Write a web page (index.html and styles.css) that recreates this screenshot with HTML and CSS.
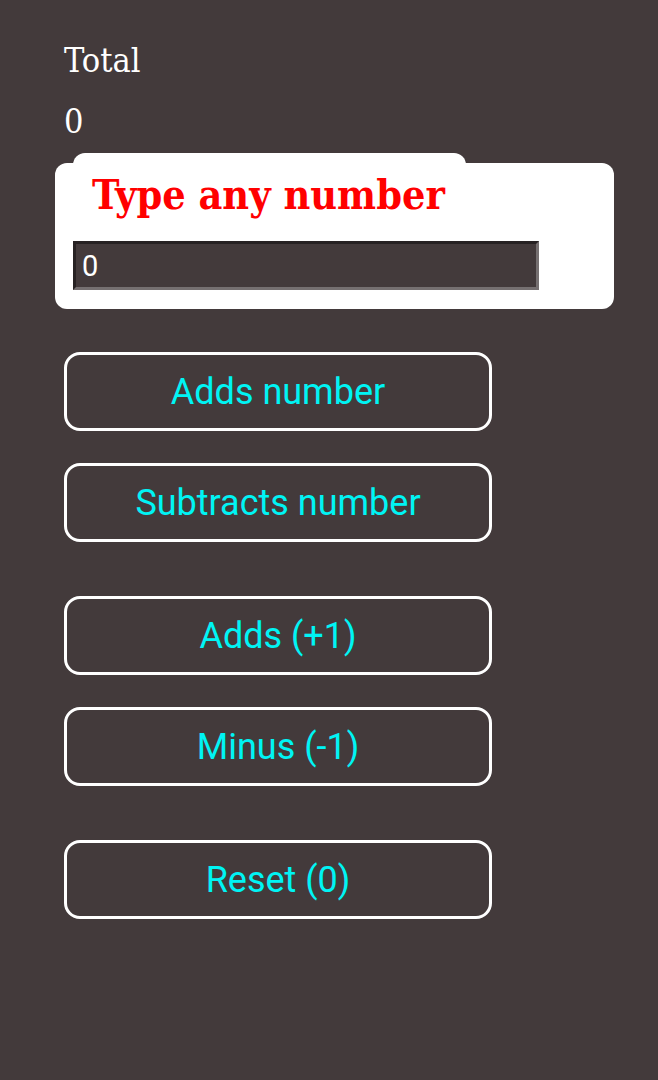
FILE: index.html
```html
<!DOCTYPE html>
<html lang="en">
<head>
<meta charset="utf-8">
<title>Counter</title>
<link rel="stylesheet" href="styles.css">
</head>
<body>
<main class="app">
  <p class="total-label">Total</p>
  <p class="total-value">0</p>
  <section class="card">
    <h2 class="card-title">Type any number</h2>
    <input class="number-input" type="text" value="0">
  </section>
  <div class="actions">
    <div class="group">
      <button class="btn">Adds number</button>
      <button class="btn">Subtracts number</button>
    </div>
    <div class="group">
      <button class="btn">Adds (+1)</button>
      <button class="btn">Minus (-1)</button>
    </div>
    <div class="group">
      <button class="btn">Reset (0)</button>
    </div>
  </div>
</main>
</body>
</html>
```
FILE: styles.css
```css
html, body {
  margin: 0;
  padding: 0;
  background: #433a3b;
}
body {
  width: 658px;
  height: 1080px;
  overflow: hidden;
}
.app {
  display: flex;
  flex-direction: column;
  padding-top: 40px;
}
.total-label,
.total-value {
  margin: 0 0 0 64px;
  font-family: "DejaVu Serif", serif;
  font-stretch: semi-condensed;
  font-size: 34px;
  line-height: 40px;
  color: #ffffff;
}
.total-value {
  margin-top: 21px;
}
.card {
  margin: 22px 0 0 55px;
  width: 559px;
  background: #ffffff;
  border-radius: 12px;
  padding-bottom: 19px;
  display: flex;
  flex-direction: column;
  align-items: flex-start;
}
.card-title {
  margin: -10px 0 0 18px;
  width: 374px;
  padding: 20px 0 0 19px;
  background: #ffffff;
  border-radius: 12px 12px 0 0;
  font-family: "DejaVu Serif", serif;
  font-stretch: semi-condensed;
  font-weight: bold;
  font-size: 41px;
  line-height: 44px;
  color: #ff0000;
  white-space: nowrap;
}
.number-input {
  margin: 24px 0 0 18px;
  box-sizing: border-box;
  width: 466px;
  height: 49px;
  padding: 0 0 0 6px;
  border-style: solid;
  border-width: 3px;
  border-color: #272223 #767071 #767071 #272223;
  background: #433a3b;
  color: #ffffff;
  font-family: Roboto, sans-serif;
  font-size: 29px;
  outline: none;
}
.actions {
  margin: 43px 0 0 64px;
  display: flex;
  flex-direction: column;
  gap: 54px;
}
.group {
  display: flex;
  flex-direction: column;
  gap: 32px;
}
.btn {
  box-sizing: border-box;
  width: 428px;
  height: 79px;
  padding: 0;
  border: 3px solid #ffffff;
  border-radius: 16px;
  background: transparent;
  color: #00f4f4;
  font-family: Roboto, sans-serif;
  font-size: 36px;
  text-align: center;
}
```
